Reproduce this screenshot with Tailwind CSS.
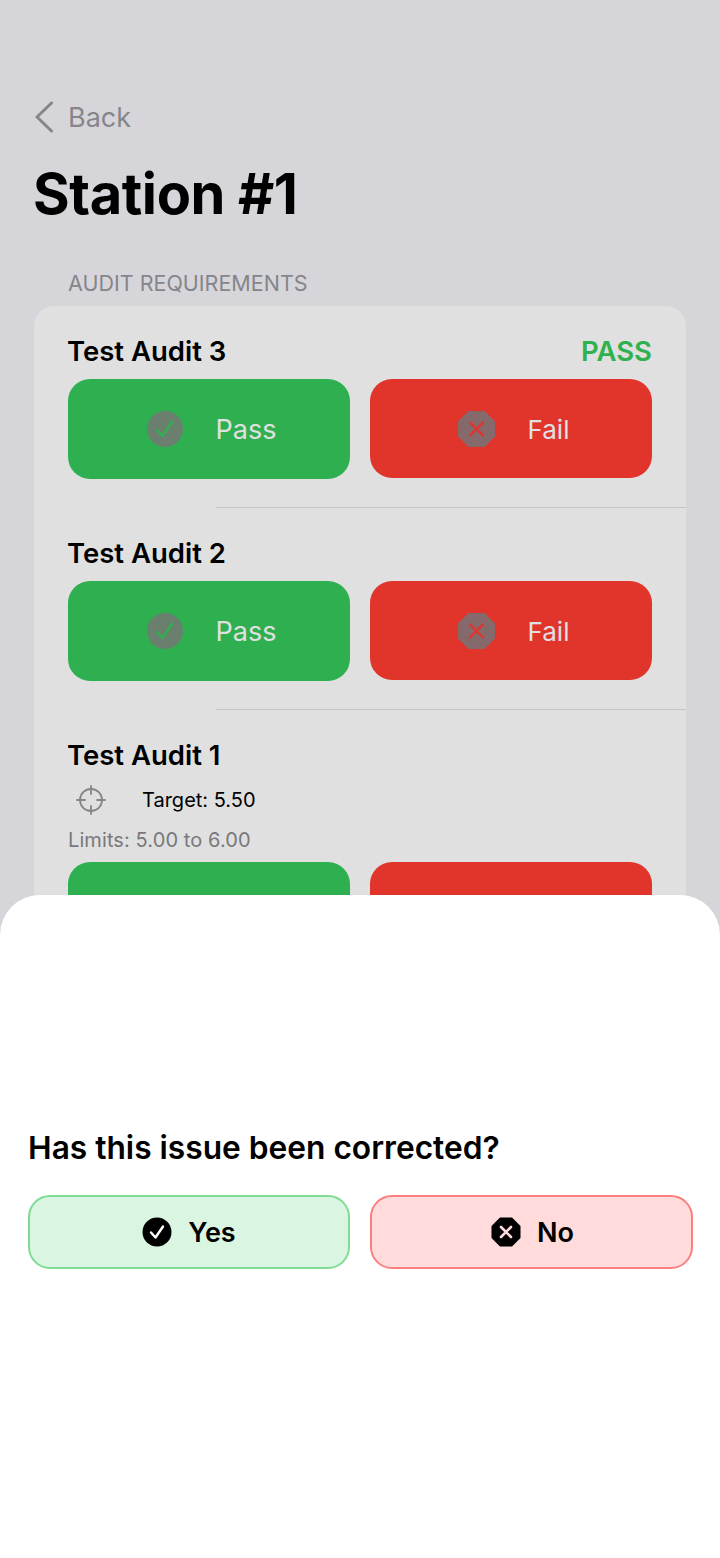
<!DOCTYPE html>
<html>
<head>
<meta charset="utf-8">
<script src="https://cdn.jsdelivr.net/npm/@tailwindcss/browser@4"></script>
</head>
<body class="m-0">
<div class="relative w-[720px] h-[1558px] overflow-hidden bg-[#d6d6da] font-['Inter',sans-serif]">
  <div class="px-[34px] pt-[98px]">
    <div class="flex items-center h-[38px] text-[#86868a]">
      <svg class="w-[22px] h-[32px]" viewBox="0 0 22 32" fill="none" stroke="#86868a" stroke-width="3" stroke-linecap="round" stroke-linejoin="round"><path d="M17.5 2 L3 16 L17.5 30"/></svg>
      <span class="ml-[12px] pt-[2px] text-[27px] leading-[38px]">Back</span>
    </div>
    <h1 class="mt-[24px] -ml-px text-[56px] leading-[68px] font-bold text-black tracking-[-0.4px]">Station #1</h1>
    <div class="mt-[42px] pl-[34px] text-[21.5px] leading-[26px] text-[#85858a] uppercase">Audit Requirements</div>
    <div class="mt-[10px] bg-[#e0e0e0] rounded-[20px] h-[900px]">
      <section class="pl-[34px] pt-[28px]">
        <div class="flex justify-between items-center pr-[34px] h-[36px]">
          <span class="-ml-px text-[27.5px] font-semibold text-black">Test Audit 3</span>
          <span class="text-[27.5px] font-semibold text-[#2fb14f]">PASS</span>
        </div>
        <div class="pr-[34px] mt-[9px] flex gap-[20px]">
          <div class="flex-1 h-[100px] rounded-[22px] bg-[#2fb050] pl-[5px] flex items-center justify-center gap-[33px] text-[27px] text-[#e0e0e0]">
            <svg class="w-[36px] h-[36px]" viewBox="0 0 36 36"><circle cx="18" cy="18" r="18" fill="#6b7f6f"/><path d="M10 19 L15.5 25 L25.5 10.5" fill="none" stroke="#2fb050" stroke-width="2.4" stroke-linecap="round" stroke-linejoin="round"/></svg>
            <span class="pt-[2px]">Pass</span>
          </div>
          <div class="flex-1 h-[99px] rounded-[22px] bg-[#e1342b] pl-[5px] flex items-center justify-center gap-[33px] text-[26px] text-[#e0e0e0]">
            <svg class="w-[37px] h-[36px]" viewBox="0 0 37 36"><path d="M11 0 H26 L37 11 V25 L26 36 H11 L0 25 V11 Z" fill="#86696b" stroke="#86696b" stroke-linejoin="round"/><path d="M12 11.5 L25 24.5 M25 11.5 L12 24.5" fill="none" stroke="#e1342b" stroke-width="2.4" stroke-linecap="round"/></svg>
            <span class="pt-[2px]">Fail</span>
          </div>
        </div>
        <div class="ml-[148px] mt-[28px] h-px bg-[#c6c6c6]"></div>
      </section>
      <section class="pl-[34px] pt-[28px]">
        <div class="flex items-center pr-[34px] h-[36px]">
          <span class="-ml-px text-[27.5px] font-semibold text-black">Test Audit 2</span>
        </div>
        <div class="pr-[34px] mt-[9px] flex gap-[20px]">
          <div class="flex-1 h-[100px] rounded-[22px] bg-[#2fb050] pl-[5px] flex items-center justify-center gap-[33px] text-[27px] text-[#e0e0e0]">
            <svg class="w-[36px] h-[36px]" viewBox="0 0 36 36"><circle cx="18" cy="18" r="18" fill="#6b7f6f"/><path d="M10 19 L15.5 25 L25.5 10.5" fill="none" stroke="#2fb050" stroke-width="2.4" stroke-linecap="round" stroke-linejoin="round"/></svg>
            <span class="pt-[2px]">Pass</span>
          </div>
          <div class="flex-1 h-[99px] rounded-[22px] bg-[#e1342b] pl-[5px] flex items-center justify-center gap-[33px] text-[26px] text-[#e0e0e0]">
            <svg class="w-[37px] h-[36px]" viewBox="0 0 37 36"><path d="M11 0 H26 L37 11 V25 L26 36 H11 L0 25 V11 Z" fill="#86696b" stroke="#86696b" stroke-linejoin="round"/><path d="M12 11.5 L25 24.5 M25 11.5 L12 24.5" fill="none" stroke="#e1342b" stroke-width="2.4" stroke-linecap="round"/></svg>
            <span class="pt-[2px]">Fail</span>
          </div>
        </div>
        <div class="ml-[148px] mt-[28px] h-px bg-[#c6c6c6]"></div>
      </section>
      <section class="pl-[34px] pt-[28px]">
        <div class="flex items-center pr-[34px] h-[36px]">
          <span class="-ml-px text-[27.5px] font-semibold text-black">Test Audit 1</span>
        </div>
        <div class="flex items-center h-[32px] mt-[10px]">
          <svg class="ml-[8px] w-[30px] h-[30px]" viewBox="0 0 30 30" fill="none" stroke="#86868a" stroke-width="1.8" stroke-linecap="round"><circle cx="15" cy="15" r="11"/><path d="M15 1 V9 M15 21 V29 M1 15 H9 M21 15 H29"/></svg>
          <span class="ml-[36px] text-[20px] text-black">Target: 5.50</span>
        </div>
        <div class="h-[28px] mt-[11px] text-[20px] leading-[26px] text-[#78787c] tracking-[0.1px]">Limits: 5.00 to 6.00</div>
        <div class="pr-[34px] mt-[7px] flex gap-[20px]">
          <div class="flex-1 h-[100px] rounded-[22px] bg-[#2fb050]"></div>
          <div class="flex-1 h-[99px] rounded-[22px] bg-[#e1342b]"></div>
        </div>
      </section>
    </div>
  </div>

  <div class="absolute left-0 right-0 top-[895px] bottom-0 bg-white rounded-t-[40px] pl-[28px] pt-[234px]">
    <div class="text-[31.7px] leading-[38px] font-semibold text-black">Has this issue been corrected?</div>
    <div class="mt-[28px] flex gap-[20px]">
      <div class="shrink-0 w-[322px] h-[74px] rounded-[22px] bg-[#daf5e2] border-2 border-[#7edc93] flex items-center justify-center gap-[16px] text-[27px] font-semibold text-black">
        <svg class="w-[30px] h-[30px]" viewBox="0 0 30 30"><circle cx="15" cy="15" r="14.5" fill="#000"/><path d="M9 15.5 L13.5 20.5 L21 9.5" fill="none" stroke="#fff" stroke-width="2.4" stroke-linecap="round" stroke-linejoin="round"/></svg>
        <span class="pt-[2px]">Yes</span>
      </div>
      <div class="shrink-0 w-[323px] h-[74px] rounded-[22px] bg-[#ffdbdb] border-2 border-[#fb7f7f] pl-[2px] flex items-center justify-center gap-[16px] text-[27px] font-semibold text-black">
        <svg class="w-[30px] h-[30px]" viewBox="0 0 30 30"><path d="M9 0.5 H21 L29.5 9 V21 L21 29.5 H9 L0.5 21 V9 Z" fill="#000"/><path d="M10 10 L20 20 M20 10 L10 20" fill="none" stroke="#ffdbdb" stroke-width="2.6" stroke-linecap="round"/></svg>
        <span class="pt-[2px]">No</span>
      </div>
    </div>
  </div>
</div>
</body>
</html>
